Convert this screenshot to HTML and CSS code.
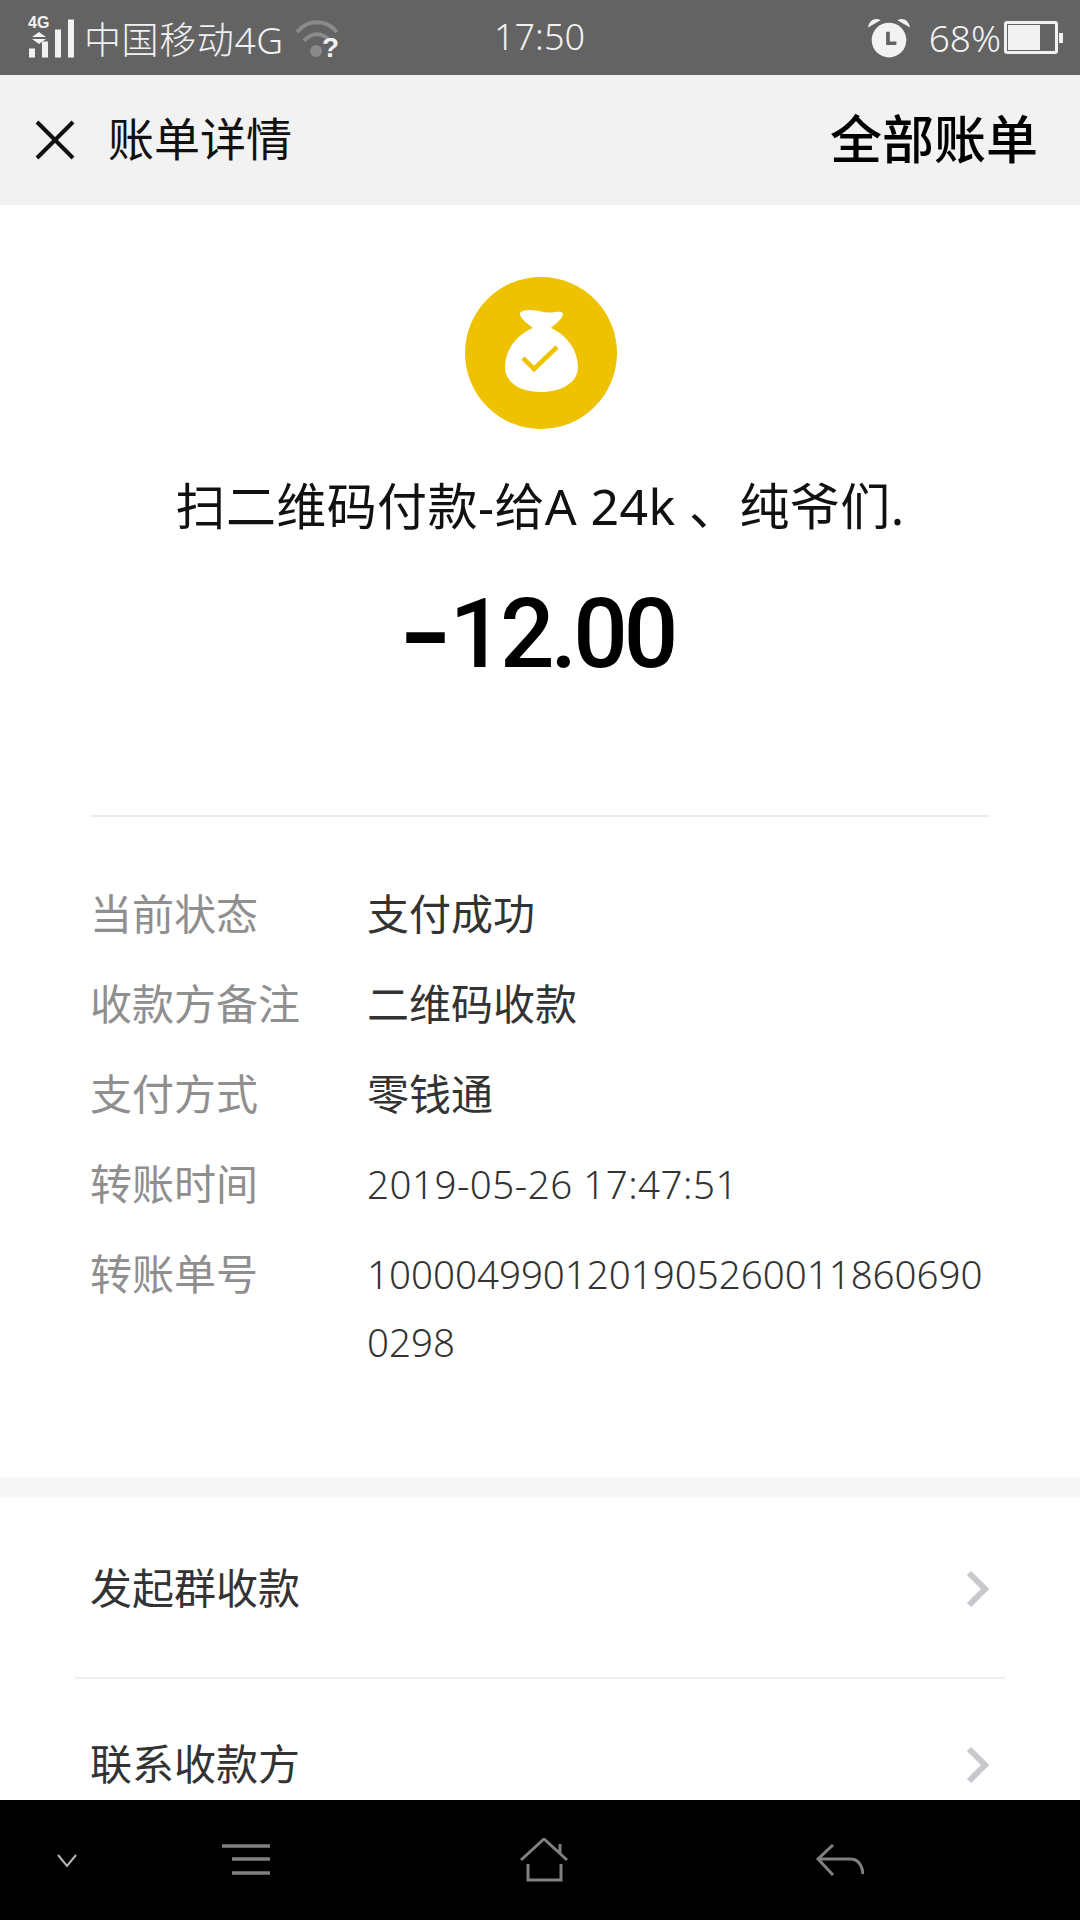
FILE: index.html
```html
<!DOCTYPE html>
<html lang="zh-CN">
<head>
    <meta charset="UTF-8">
    <meta name="viewport" content="width=device-width, initial-scale=1.0">
    <title>账单详情</title>
    <link rel="stylesheet" href="styles.css">
</head>
<body>
    <div class="phone">
        <div class="status-bar">
            <div class="status-left">
                <svg class="signal" width="46" height="58" viewBox="0 0 46 58">
                    <text x="0" y="18.5" class="net-label">4G</text>
                    <path d="M4 28l7-5 7 5zM4 30h14l-7 5z" fill="#f2f2f2"/>
                    <rect x="1" y="39.5" width="6" height="9" fill="#f2f2f2"/>
                    <rect x="14" y="32.5" width="6" height="16" fill="#f2f2f2"/>
                    <rect x="27" y="20.5" width="6" height="28" fill="#f2f2f2"/>
                    <rect x="40" y="10.5" width="6" height="38" fill="#f2f2f2"/>
                </svg>
                <span class="carrier">中国移动4G</span>
                <svg class="wifi" width="44" height="54" viewBox="0 0 44 54" fill="none">
                    <path d="M1 21C12 8 30 8 41 21" stroke="#8a8a8a" stroke-width="4"/>
                    <path d="M8 30C15 21 27 21 34 30" stroke="#8a8a8a" stroke-width="4"/>
                    <circle cx="20" cy="40" r="6" fill="#8a8a8a"/>
                    <text x="26" y="45.5" class="wifi-mark">?</text>
                </svg>
            </div>
            <span class="clock">17:50</span>
            <div class="status-right">
                <svg class="alarm" width="42" height="40" viewBox="0 0 40 38">
                    <circle cx="20" cy="21" r="16.5" fill="#f2f2f2"/>
                    <path d="M0 9C1 2 7 -1 12 2zM40 9C39 2 33 -1 28 2z" fill="#f2f2f2"/>
                    <path d="M19 13v11h8" stroke="#636363" stroke-width="3.5" fill="none"/>
                </svg>
                <span class="percent">68%</span>
                <div class="battery">
                    <div class="battery-body"><div class="battery-fill" style="width: 70%"></div></div>
                    <div class="battery-tip"></div>
                </div>
            </div>
        </div>

        <div class="nav-bar">
            <div class="nav-left">
                <svg class="close" width="40" height="40" viewBox="0 0 40 40">
                    <path d="M2 2L38 38M38 2L2 38" stroke="#111" stroke-width="4" fill="none"/>
                </svg>
                <span class="nav-title">账单详情</span>
            </div>
            <span class="nav-action">全部账单</span>
        </div>

        <div class="content">
            <div class="summary">
                <div class="bag-circle">
                    <svg width="152" height="152" viewBox="0 0 152 152">
                        <path d="M55 38C54 34 60 33 66 33C74 33 80 37 90 35C98 34 99 36 97 40C94 45 90 47 86 51C100 57 113 72 113 90C113 106 96 115 76 115C56 115 40 106 40 90C40 72 53 57 68 51C63 47 57 43 55 38Z" fill="#fff"/>
                        <path d="M58 81L69 92L92 70" stroke="#eec200" stroke-width="4.5" fill="none"/>
                    </svg>
                </div>
                <p class="payee">扫二维码付款-给A 24k 、纯爷们.</p>
                <p class="amount"><span class="amount-sign">-</span>12.00</p>
            </div>

            <div class="details">
                <div class="detail-row"><span class="detail-label">当前状态</span><span class="detail-value">支付成功</span></div>
                <div class="detail-row"><span class="detail-label">收款方备注</span><span class="detail-value">二维码收款</span></div>
                <div class="detail-row"><span class="detail-label">支付方式</span><span class="detail-value">零钱通</span></div>
                <div class="detail-row"><span class="detail-label">转账时间</span><span class="detail-value detail-number detail-date">2019-05-26 17:47:51</span></div>
                <div class="detail-row"><span class="detail-label">转账单号</span><span class="detail-value detail-number">10000499012019052600118606900298</span></div>
            </div>

            <div class="section-gap"></div>

            <div class="links">
                <div class="link-row">
                    <span class="link-text">发起群收款</span>
                    <svg width="24" height="36" viewBox="0 0 24 36"><path d="M3 2L19 18L3 34" stroke="#c8c8cc" stroke-width="6" fill="none"/></svg>
                </div>
                <div class="link-row">
                    <span class="link-text">联系收款方</span>
                    <svg width="24" height="36" viewBox="0 0 24 36"><path d="M3 2L19 18L3 34" stroke="#c8c8cc" stroke-width="6" fill="none"/></svg>
                </div>
            </div>
        </div>

        <div class="bottom-bar">
            <svg class="nav-hide" width="20" height="13" viewBox="0 0 20 13"><path d="M1 1L10 12L19 1" stroke="#b5b5b5" stroke-width="2" fill="none"/></svg>
            <svg class="nav-menu" width="48" height="32" viewBox="0 0 48 32">
                <path d="M0 2H48M10 15H48M10 29H48" stroke="#808080" stroke-width="3.5" fill="none"/>
            </svg>
            <svg class="nav-home" width="48" height="44" viewBox="0 0 48 44" fill="none" stroke="#808080" stroke-width="3">
                <path d="M1 22L24 1L47 22M40 6V16"/>
                <path d="M8 26V42H41V26"/>
            </svg>
            <svg class="nav-back" width="48" height="32" viewBox="0 0 48 32" fill="none" stroke="#808080" stroke-width="3">
                <path d="M17 1L2 15L17 31M2 15H34C42 15 46 21 47 30"/>
            </svg>
        </div>
    </div>
</body>
</html>
```

FILE: styles.css
```css
* {
    box-sizing: border-box;
}
body {
    margin: 0;
    background-color: #fff;
    font-family: "Noto Sans", "Noto Sans CJK SC", sans-serif;
}
p {
    margin: 0;
}
.phone {
    width: 1080px;
    height: 1920px;
    display: flex;
    flex-direction: column;
    overflow: hidden;
}
.status-bar {
    height: 75px;
    flex: none;
    display: grid;
    grid-template-columns: 1fr auto 1fr;
    align-items: center;
    padding: 0 17px 0 28px;
    background-color: #636363;
    color: #f2f2f2;
    font-size: 37px;
    font-weight: 300;
}
.status-left, .status-right {
    display: flex;
    align-items: center;
}
.status-right {
    justify-content: flex-end;
}
.net-label {
    font-family: "Liberation Sans", sans-serif;
    font-size: 16px;
    font-weight: 700;
    fill: #f2f2f2;
}
.wifi-mark {
    font-family: "Liberation Sans", sans-serif;
    font-size: 28px;
    font-weight: 700;
    fill: #f2f2f2;
}
.carrier {
    margin-left: 10px;
    letter-spacing: 0.6px;
    white-space: nowrap;
}
.wifi {
    margin-left: 12px;
}
.clock {
    font-size: 36px;
    margin: -2px 12px 0 0;
}
.percent {
    margin-left: 19px;
}
.battery {
    display: flex;
    align-items: center;
    margin-left: 3px;
}
.battery-body {
    width: 54px;
    height: 33px;
    border: 3px solid #f2f2f2;
    border-radius: 3px;
    padding: 1px;
}
.battery-fill {
    height: 100%;
    background-color: #f2f2f2;
}
.battery-tip {
    width: 4px;
    height: 10px;
    margin-left: 1px;
    background-color: #f2f2f2;
}
.nav-bar {
    height: 130px;
    flex: none;
    display: flex;
    align-items: center;
    justify-content: space-between;
    padding: 0 42px 0 35px;
    background-color: #f2f2f2;
}
.nav-left {
    display: flex;
    align-items: center;
}
.nav-title {
    margin: 0 0 8px 33px;
    font-size: 46px;
    color: #111;
}
.nav-action {
    margin-bottom: 8px;
    font-size: 52px;
    font-weight: 500;
    color: #000;
}
.content {
    flex: 1;
    overflow: hidden;
    background-color: #fff;
}
.summary {
    display: flex;
    flex-direction: column;
    align-items: center;
    margin: 0 90px;
    padding-top: 72px;
    border-bottom: 2px solid #ececec;
    height: 612px;
}
.bag-circle {
    width: 152px;
    height: 152px;
    margin-left: 2px;
    border-radius: 50%;
    background-color: #eec200;
}
.bag-circle svg {
    display: block;
}
.payee {
    margin-top: 47px;
    font-size: 50px;
    line-height: 60px;
    letter-spacing: 0.4px;
    color: #111;
    white-space: nowrap;
}
.amount {
    margin-top: 43px;
    font-family: Roboto, sans-serif;
    font-size: 96px;
    line-height: 110px;
    letter-spacing: -4px;
    font-weight: 500;
    color: #000;
}
.amount-sign {
    display: inline-block;
    margin: 0 10px 0 0;
    font-weight: 700;
    transform: scaleX(1.45);
}
.details {
    margin: 0 90px;
    padding-top: 63px;
    height: 660px;
}
.detail-row {
    display: flex;
    margin-bottom: 22px;
    font-size: 42px;
    line-height: 68px;
}
.detail-label {
    width: 277px;
    flex: none;
    color: #8f8f8f;
}
.detail-value {
    flex: 1;
    color: #333;
    word-break: break-all;
}
.detail-number {
    font-size: 38.5px;
    font-weight: 300;
}
.detail-date {
    letter-spacing: 0.5px;
}
.section-gap {
    height: 20px;
    background-color: #f7f7f7;
}
.links {
    margin: 0 75px;
}
.link-row {
    height: 180px;
    display: flex;
    align-items: center;
    justify-content: space-between;
    padding: 3px 15px 0;
    font-size: 42px;
    color: #333;
}
.link-row + .link-row {
    height: 174px;
    padding-top: 0;
    border-top: 2px solid #efefef;
}
.link-text {
    margin-bottom: 7px;
}
.bottom-bar {
    height: 120px;
    flex: none;
    display: flex;
    align-items: center;
    background-color: #000;
}
.nav-hide {
    margin-left: 57px;
}
.nav-menu {
    margin-left: 145px;
}
.nav-home {
    margin-left: 250px;
}
.nav-back {
    margin-left: 248px;
}
```
